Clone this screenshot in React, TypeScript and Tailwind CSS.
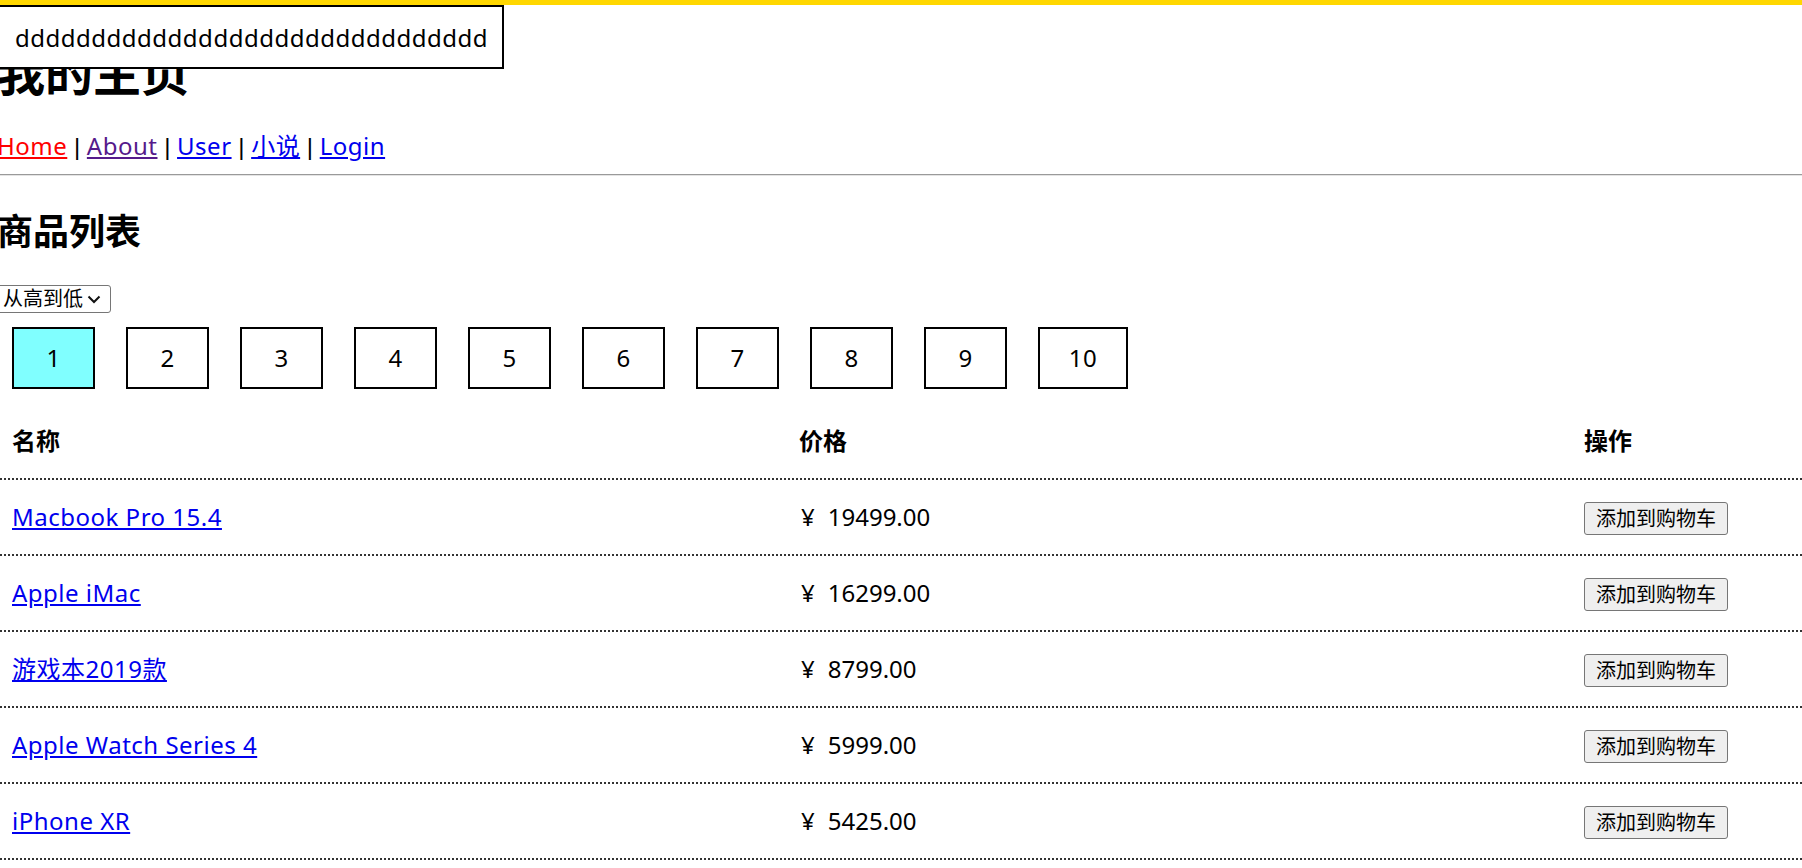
import React from "react";

const products = [
  { name: "Macbook Pro 15.4", price: "19499.00" },
  { name: "Apple iMac", price: "16299.00" },
  { name: "游戏本2019款", price: "8799.00" },
  { name: "Apple Watch Series 4", price: "5999.00" },
  { name: "iPhone XR", price: "5425.00" },
];

const pages = [1, 2, 3, 4, 5, 6, 7, 8, 9, 10];

function Sep() {
  return <span className="font-['Liberation_Sans',sans-serif] tracking-normal"> | </span>;
}

export default function App() {
  return (
    <div className="relative w-[1802px] h-[868px] overflow-hidden bg-white text-black font-['Noto_Sans','Noto_Sans_CJK_SC',sans-serif] text-[24px] tracking-[0.5px]">
      <div className="h-[5px] bg-[#ffd700]" />

      <div className="-ml-[3px]">
        <h1 className="mt-[44px] text-[48px] leading-[48px] font-bold tracking-normal">我的主页</h1>

        <nav className="mt-[32px] leading-[33px] whitespace-pre">
          <a href="#" className="text-[#ff0000] underline">Home</a>
          <Sep />
          <a href="#" className="text-[#551a8b] underline">About</a>
          <Sep />
          <a href="#" className="text-[#0000ee] underline">User</a>
          <Sep />
          <a href="#" className="text-[#0000ee] underline">小说</a>
          <Sep />
          <a href="#" className="text-[#0000ee] underline">Login</a>
        </nav>

        <div className="mt-[11px] border-t border-b border-t-[#9a9a9a] border-b-[#e4e4e4]" />

        <h2 className="mt-[38px] text-[36px] leading-[36px] font-bold tracking-normal">商品列表</h2>

        <div className="mt-[35px] flex items-center w-[114px] h-[28px] border border-[#767676] rounded-[3px] pl-[5px] text-[20px] leading-[26px] tracking-normal bg-white">
          <span>从高到低</span>
          <svg className="ml-[3px]" width="16" height="16" viewBox="0 0 16 16" fill="none">
            <path d="M2.5 5.5 L8 11 L13.5 5.5" stroke="#111" strokeWidth="2" />
          </svg>
        </div>

        <div className="mt-[14px] flex pl-[15px] gap-[31px]">
          {pages.map((p) => (
            <div
              key={p}
              className={`flex items-center justify-center h-[62px] border-2 border-black ${
                p === 10 ? "w-[90px]" : "w-[83px]"
              } ${p === 1 ? "bg-[#80ffff]" : "bg-white"}`}
            >
              {p}
            </div>
          ))}
        </div>

        <div className="mt-[15px] w-[1805px]">
          <div className="grid grid-cols-[787px_785px_1fr] h-[76px] items-center border-b-2 border-dotted border-[#333] font-bold tracking-normal">
            <div className="pl-[15px]">名称</div>
            <div className="pl-[15px]">价格</div>
            <div className="pl-[15px]">操作</div>
          </div>
          {products.map((item) => (
            <div
              key={item.name}
              className="grid grid-cols-[787px_785px_1fr] h-[76px] items-center border-b-2 border-dotted border-[#333]"
            >
              <div className="pl-[15px]">
                <a href="#" className="text-[#0000ee] underline">{item.name}</a>
              </div>
              <div className="pl-[17px] tracking-normal">
                <span>¥</span>
                <span className="ml-[13px]">{item.price}</span>
              </div>
              <div className="pl-[15px]">
                <button className="w-[144px] h-[33px] bg-[#efefef] border border-[#767676] rounded-[3px] text-[20px] leading-[29px] tracking-normal text-black">
                  添加到购物车
                </button>
              </div>
            </div>
          ))}
        </div>
      </div>

      <div className="absolute top-[5px] left-[-3px] w-[507px] h-[64px] border-2 border-black bg-white flex items-center pl-[16px] leading-[33px] tracking-[0.5px]">
        ddddddddddddddddddddddddddddddd
      </div>
    </div>
  );
}
